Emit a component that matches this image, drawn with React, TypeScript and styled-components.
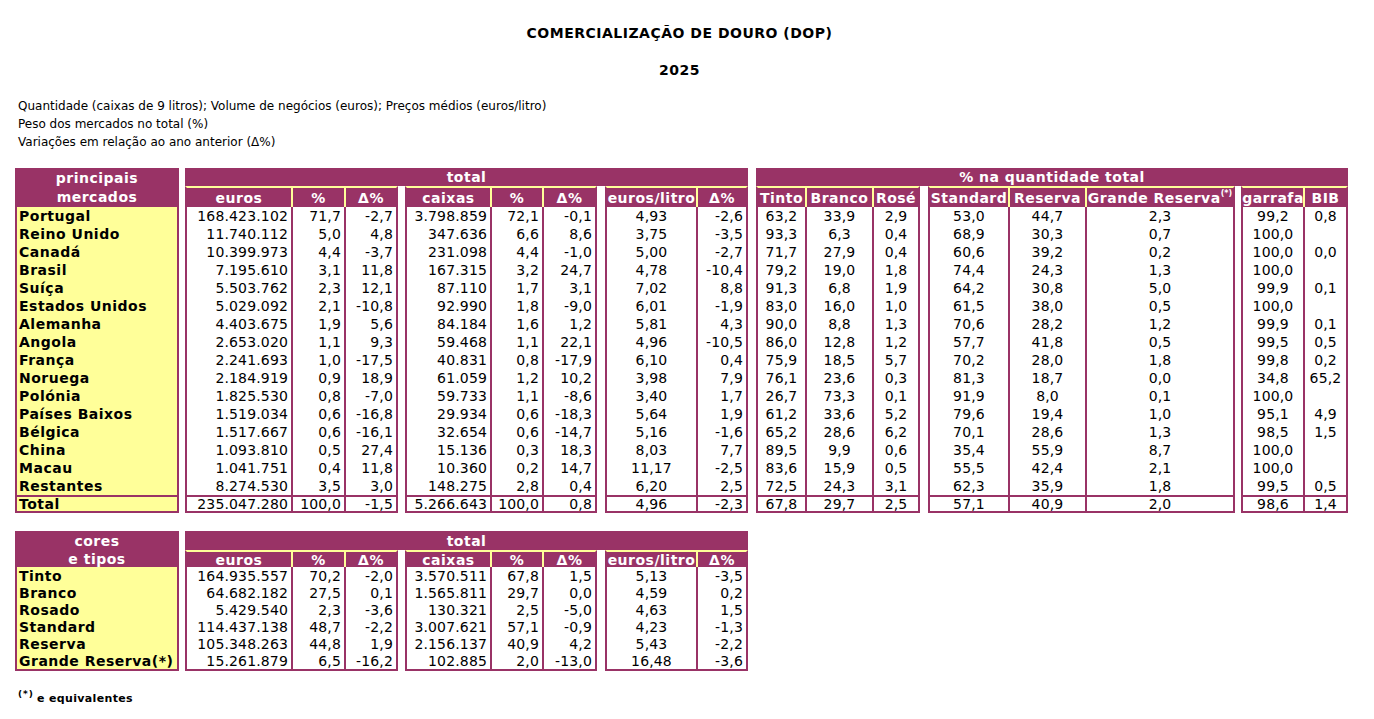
import React from "react";
import styled, { createGlobalStyle } from "styled-components";

const MAROON = "#993366";
const YELLOW = "#ffff99";

type Align = "left" | "right" | "center";

const GlobalStyle = createGlobalStyle`
  body {
    margin: 0;
    background: #fff;
    color: #000;
    font-family: "DejaVu Sans", Verdana, sans-serif;
  }
`;

const Page = styled.div`
  width: 1333px;
  padding: 24px 0 0 15px;
`;

const Title = styled.h1`
  margin: 0;
  font-size: 14px;
  line-height: 18px;
  font-weight: bold;
  letter-spacing: 0.5px;
  text-align: center;
  padding-right: 4px;
`;

const Year = styled(Title)`
  margin-top: 19px;
`;

const Notes = styled.div`
  margin-top: 18px;
  padding-left: 3px;
  font-size: 12px;
  line-height: 18px;
`;

const Sheet = styled.div<{ $cols: number[]; $rows: string; $gap: number }>`
  display: grid;
  grid-template-columns: ${(p) => p.$cols.map((c) => `${c}px`).join(" ")};
  grid-template-rows: ${(p) => p.$rows};
  margin-top: ${(p) => p.$gap}px;
  font-size: 14px;
`;

const Gap = styled.div``;

const HeadBlock = styled.div<{ $span: number }>`
  grid-column: span ${(p) => p.$span};
  background: ${MAROON};
  color: #fff;
  font-weight: bold;
  letter-spacing: 0.5px;
  display: flex;
  align-items: center;
  justify-content: center;
`;

const LabelHead = styled.div<{ $line: number }>`
  grid-row: span 2;
  background: ${MAROON};
  color: #fff;
  font-weight: bold;
  letter-spacing: 0.5px;
  line-height: ${(p) => p.$line}px;
  display: flex;
  align-items: center;
  justify-content: center;
  text-align: center;
  padding-top: 1px;
`;

const SubHead = styled.div<{ $first: boolean; $last: boolean }>`
  box-sizing: border-box;
  background: ${MAROON};
  color: #fff;
  font-weight: bold;
  letter-spacing: 0.5px;
  white-space: nowrap;
  border-top: 2px solid ${YELLOW};
  border-left: ${(p) => (p.$first ? `2px solid ${MAROON}` : "none")};
  border-right: 2px solid ${(p) => (p.$last ? MAROON : YELLOW)};
  display: flex;
  align-items: center;
  justify-content: center;

  sup {
    font-size: 8px;
    letter-spacing: 0;
    align-self: flex-start;
    margin-top: 1px;
  }
`;

const Cell = styled.div<{
  $align: Align;
  $first: boolean;
  $top: boolean;
  $bottom: boolean;
}>`
  box-sizing: border-box;
  display: flex;
  align-items: center;
  justify-content: ${(p) =>
    p.$align === "right" ? "flex-end" : p.$align === "center" ? "center" : "flex-start"};
  padding: 0 3px;
  white-space: nowrap;
  letter-spacing: 0.15px;
  border-right: 2px solid ${MAROON};
  border-left: ${(p) => (p.$first ? `2px solid ${MAROON}` : "none")};
  border-top: ${(p) => (p.$top ? `2px solid ${MAROON}` : "none")};
  border-bottom: ${(p) => (p.$bottom ? `2px solid ${MAROON}` : "none")};
`;

const LabelCell = styled.div<{ $top: boolean; $bottom: boolean }>`
  box-sizing: border-box;
  display: flex;
  align-items: center;
  padding-left: 2px;
  background: ${YELLOW};
  font-weight: bold;
  letter-spacing: 0.5px;
  white-space: nowrap;
  border-left: 2px solid ${MAROON};
  border-right: 2px solid ${MAROON};
  border-top: ${(p) => (p.$top ? `2px solid ${MAROON}` : "none")};
  border-bottom: ${(p) => (p.$bottom ? `2px solid ${MAROON}` : "none")};
`;

const Footnote = styled.div`
  margin-top: 15px;
  padding-left: 3px;
  font-size: 11px;
  line-height: 16px;
  font-weight: bold;
  letter-spacing: 0.35px;

  sup {
    font-size: 9px;
    letter-spacing: 1px;
    margin-right: 3px;
  }
`;

type Group = { heads: React.ReactNode[]; align: Align[] };

const marketGroups: Group[] = [
  { heads: ["euros", "%", "Δ%"], align: ["right", "right", "right"] },
  { heads: ["caixas", "%", "Δ%"], align: ["right", "right", "right"] },
  { heads: ["euros/litro", "Δ%"], align: ["center", "right"] },
  { heads: ["Tinto", "Branco", "Rosé"], align: ["center", "center", "center"] },
  {
    heads: [
      "Standard",
      "Reserva",
      <>
        Grande Reserva<sup>(*)</sup>
      </>,
    ],
    align: ["center", "center", "center"],
  },
  { heads: ["garrafa", "BIB"], align: ["center", "center"] },
];

const marketCols = [164, 6, 108, 53, 52, 7, 87, 52, 53, 8, 93, 50, 8, 51, 67, 46, 8, 82, 77, 148, 6, 64, 43];
const typeCols = marketCols.slice(0, 12);

const markets: string[][] = [
  ["Portugal", "168.423.102", "71,7", "-2,7", "3.798.859", "72,1", "-0,1", "4,93", "-2,6", "63,2", "33,9", "2,9", "53,0", "44,7", "2,3", "99,2", "0,8"],
  ["Reino Unido", "11.740.112", "5,0", "4,8", "347.636", "6,6", "8,6", "3,75", "-3,5", "93,3", "6,3", "0,4", "68,9", "30,3", "0,7", "100,0", ""],
  ["Canadá", "10.399.973", "4,4", "-3,7", "231.098", "4,4", "-1,0", "5,00", "-2,7", "71,7", "27,9", "0,4", "60,6", "39,2", "0,2", "100,0", "0,0"],
  ["Brasil", "7.195.610", "3,1", "11,8", "167.315", "3,2", "24,7", "4,78", "-10,4", "79,2", "19,0", "1,8", "74,4", "24,3", "1,3", "100,0", ""],
  ["Suíça", "5.503.762", "2,3", "12,1", "87.110", "1,7", "3,1", "7,02", "8,8", "91,3", "6,8", "1,9", "64,2", "30,8", "5,0", "99,9", "0,1"],
  ["Estados Unidos", "5.029.092", "2,1", "-10,8", "92.990", "1,8", "-9,0", "6,01", "-1,9", "83,0", "16,0", "1,0", "61,5", "38,0", "0,5", "100,0", ""],
  ["Alemanha", "4.403.675", "1,9", "5,6", "84.184", "1,6", "1,2", "5,81", "4,3", "90,0", "8,8", "1,3", "70,6", "28,2", "1,2", "99,9", "0,1"],
  ["Angola", "2.653.020", "1,1", "9,3", "59.468", "1,1", "22,1", "4,96", "-10,5", "86,0", "12,8", "1,2", "57,7", "41,8", "0,5", "99,5", "0,5"],
  ["França", "2.241.693", "1,0", "-17,5", "40.831", "0,8", "-17,9", "6,10", "0,4", "75,9", "18,5", "5,7", "70,2", "28,0", "1,8", "99,8", "0,2"],
  ["Noruega", "2.184.919", "0,9", "18,9", "61.059", "1,2", "10,2", "3,98", "7,9", "76,1", "23,6", "0,3", "81,3", "18,7", "0,0", "34,8", "65,2"],
  ["Polónia", "1.825.530", "0,8", "-7,0", "59.733", "1,1", "-8,6", "3,40", "1,7", "26,7", "73,3", "0,1", "91,9", "8,0", "0,1", "100,0", ""],
  ["Países Baixos", "1.519.034", "0,6", "-16,8", "29.934", "0,6", "-18,3", "5,64", "1,9", "61,2", "33,6", "5,2", "79,6", "19,4", "1,0", "95,1", "4,9"],
  ["Bélgica", "1.517.667", "0,6", "-16,1", "32.654", "0,6", "-14,7", "5,16", "-1,6", "65,2", "28,6", "6,2", "70,1", "28,6", "1,3", "98,5", "1,5"],
  ["China", "1.093.810", "0,5", "27,4", "15.136", "0,3", "18,3", "8,03", "7,7", "89,5", "9,9", "0,6", "35,4", "55,9", "8,7", "100,0", ""],
  ["Macau", "1.041.751", "0,4", "11,8", "10.360", "0,2", "14,7", "11,17", "-2,5", "83,6", "15,9", "0,5", "55,5", "42,4", "2,1", "100,0", ""],
  ["Restantes", "8.274.530", "3,5", "3,0", "148.275", "2,8", "0,4", "6,20", "2,5", "72,5", "24,3", "3,1", "62,3", "35,9", "1,8", "99,5", "0,5"],
  ["Total", "235.047.280", "100,0", "-1,5", "5.266.643", "100,0", "0,8", "4,96", "-2,3", "67,8", "29,7", "2,5", "57,1", "40,9", "2,0", "98,6", "1,4"],
];

const types: string[][] = [
  ["Tinto", "164.935.557", "70,2", "-2,0", "3.570.511", "67,8", "1,5", "5,13", "-3,5"],
  ["Branco", "64.682.182", "27,5", "0,1", "1.565.811", "29,7", "0,0", "4,59", "0,2"],
  ["Rosado", "5.429.540", "2,3", "-3,6", "130.321", "2,5", "-5,0", "4,63", "1,5"],
  ["Standard", "114.437.138", "48,7", "-2,2", "3.007.621", "57,1", "-0,9", "4,23", "-1,3"],
  ["Reserva", "105.348.263", "44,8", "1,9", "2.156.137", "40,9", "4,2", "5,43", "-2,2"],
  ["Grande Reserva(*)", "15.261.879", "6,5", "-16,2", "102.885", "2,0", "-13,0", "16,48", "-3,6"],
];

const renderSubHeads = (groups: Group[]) =>
  groups.flatMap((g, gi) => [
    <Gap key={`g${gi}`} />,
    ...g.heads.map((h, i) => (
      <SubHead key={`h${gi}-${i}`} $first={i === 0} $last={i === g.heads.length - 1}>
        {h}
      </SubHead>
    )),
  ]);

const renderRow = (row: string[], groups: Group[], top: boolean, bottom: boolean) => {
  const out: React.ReactNode[] = [
    <LabelCell key="label" $top={top} $bottom={bottom}>
      {row[0]}
    </LabelCell>,
  ];
  let idx = 1;
  groups.forEach((g, gi) => {
    out.push(<Gap key={`g${gi}`} />);
    g.align.forEach((a, i) => {
      out.push(
        <Cell key={`c${idx}`} $align={a} $first={i === 0} $top={top} $bottom={bottom}>
          {row[idx]}
        </Cell>
      );
      idx += 1;
    });
  });
  return <React.Fragment key={row[0]}>{out}</React.Fragment>;
};

export default function App() {
  const typeGroups = marketGroups.slice(0, 3);
  return (
    <Page>
      <GlobalStyle />
      <Title>COMERCIALIZAÇÃO DE DOURO (DOP)</Title>
      <Year as="h2">2025</Year>
      <Notes>
        <div>Quantidade (caixas de 9 litros); Volume de negócios (euros); Preços médios (euros/litro)</div>
        <div>Peso dos mercados no total (%)</div>
        <div>Variações em relação ao ano anterior (Δ%)</div>
      </Notes>

      <Sheet $cols={marketCols} $rows="18px 21px repeat(16, 18px) 18px" $gap={17}>
        <LabelHead $line={19.5}>
          principais
          <br />
          mercados
        </LabelHead>
        <Gap />
        <HeadBlock $span={10}>total</HeadBlock>
        <Gap />
        <HeadBlock $span={10}>% na quantidade total</HeadBlock>
        {renderSubHeads(marketGroups)}
        {markets.map((row, i) =>
          renderRow(row, marketGroups, i === markets.length - 1, i === markets.length - 1)
        )}
      </Sheet>

      <Sheet $cols={typeCols} $rows="19px 17px repeat(5, 17px) 19px" $gap={18}>
        <LabelHead $line={18}>
          cores
          <br />e tipos
        </LabelHead>
        <Gap />
        <HeadBlock $span={10}>total</HeadBlock>
        {renderSubHeads(typeGroups)}
        {types.map((row, i) => renderRow(row, typeGroups, false, i === types.length - 1))}
      </Sheet>

      <Footnote>
        <sup>(*)</sup>e equivalentes
      </Footnote>
    </Page>
  );
}
